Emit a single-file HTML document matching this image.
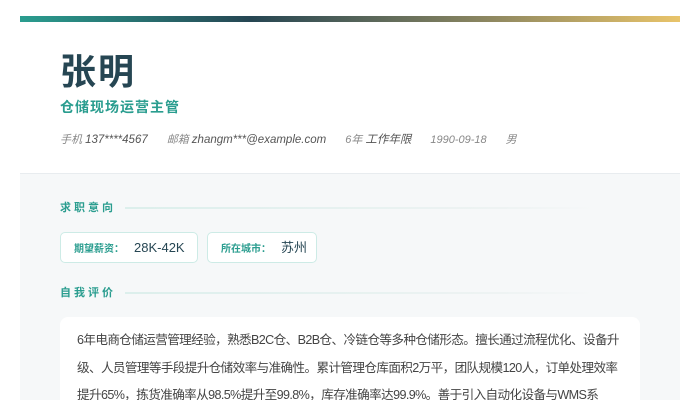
<!DOCTYPE html>
<html><head><meta charset="utf-8"><style>
*{margin:0;padding:0;box-sizing:border-box}
html,body{width:700px;height:400px;overflow:hidden}
body{background:#fff;font-family:"Liberation Sans","Noto Sans CJK SC",sans-serif;position:relative}
.wrap{position:absolute;left:20px;top:16px;width:660px;height:384px;background:#fff;overflow:hidden}
.bar{height:6px;background:linear-gradient(90deg,#2a9d8f 0%,#264653 35%,#8a8560 70%,#e9c46a 100%)}
.name{position:absolute;left:40px;top:34px;font-size:36px;font-weight:bold;color:#264653;letter-spacing:2px;line-height:44px}
.title{position:absolute;left:40px;top:81px;font-size:14px;font-weight:bold;color:#2a9d8f;letter-spacing:1px;line-height:20px}
.meta{position:absolute;left:40px;top:116px;font-size:11px;font-style:italic;color:#888;line-height:16px;white-space:nowrap}
.meta span{margin-right:19px}.meta b{font-weight:normal;color:#555;font-size:11.5px}
.body{position:absolute;left:0;top:157px;width:660px;height:260px;background:#f6f8f9;border-top:1px solid #e8ecef}
.sec{position:absolute;left:40px;font-size:11px;font-weight:bold;color:#2a9d8f;letter-spacing:3px;line-height:16px}
.line{position:absolute;left:105px;width:470px;height:2px;background:linear-gradient(90deg,#dcefec,#eef3f3 80%,transparent)}
.tag{position:absolute;top:58px;height:31px;background:#fff;border:1px solid #cdebe6;border-radius:5px;font-size:13px;color:#264653;line-height:29px;padding-left:13px}
.tag i{font-style:normal;font-size:10px;font-weight:bold;color:#2a9d8f;margin-right:10px}
.card{position:absolute;left:40px;top:143px;width:580px;height:140px;background:#fff;border-radius:8px;padding:10px 0 0 17px;font-size:12.6px;line-height:27.5px;color:#444;letter-spacing:-0.62px;white-space:nowrap;overflow:hidden}
</style></head><body>
<div class="wrap">
<div class="bar"></div>
<div class="name">张明</div>
<div class="title">仓储现场运营主管</div>
<div class="meta"><span>手机 <b>137****4567</b></span><span>邮箱 <b>zhangm***@example.com</b></span><span>6年 <b>工作年限</b></span><span>1990-09-18</span><span>男</span></div>
<div class="body">
<div class="sec" style="top:26px">求职意向</div><div class="line" style="top:33px"></div>
<div class="tag" style="left:40px;width:138px"><i>期望薪资：</i>28K-42K</div>
<div class="tag" style="left:187px;width:110px"><i>所在城市：</i>苏州</div>
<div class="sec" style="top:111px">自我评价</div><div class="line" style="top:118px"></div>
<div class="card">6年电商仓储运营管理经验，熟悉B2C仓、B2B仓、冷链仓等多种仓储形态。擅长通过流程优化、设备升<br>级、人员管理等手段提升仓储效率与准确性。累计管理仓库面积2万平，团队规模120人，订单处理效率<br>提升65%，拣货准确率从98.5%提升至99.8%，库存准确率达99.9%。善于引入自动化设备与WMS系<br>统，实现降本增效。</div>
</div>
</div>
</body></html>
